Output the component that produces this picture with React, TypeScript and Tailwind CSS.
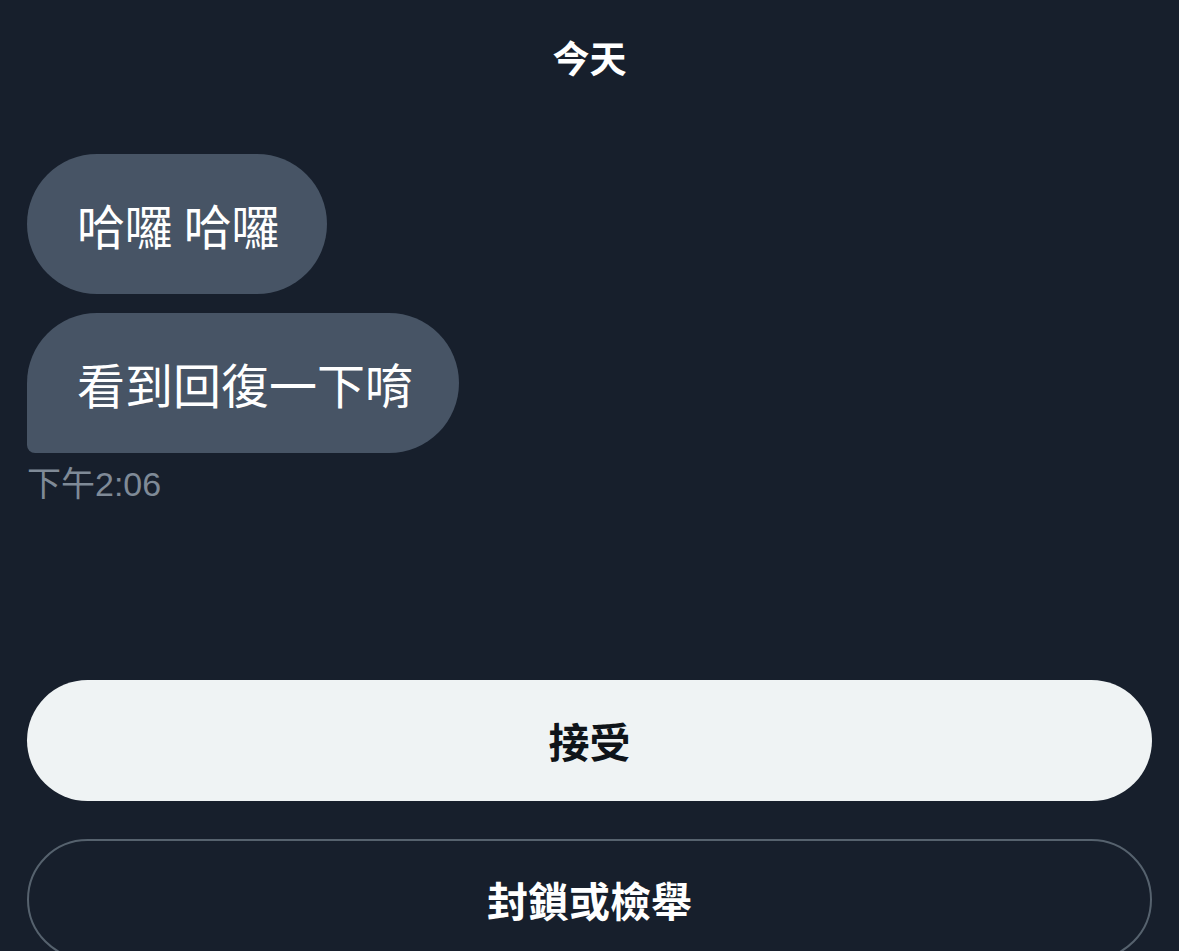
export default function App() {
  return (
    <div
      className="h-[951px] w-full overflow-hidden bg-[#171f2c] px-[27px]"
      style={{ fontFamily: '"Noto Sans CJK TC", "Noto Sans", sans-serif' }}
    >
      {/* Date divider */}
      <div className="pt-[34px] text-center text-[37px] font-bold leading-[46px] text-white">今天</div>

      {/* Messages */}
      <div className="mt-[74px] flex flex-col items-start gap-[19px]">
        <div className="flex h-[140px] items-center rounded-[70px] bg-[#475465] pl-[50px] pr-[47px] text-[48px] leading-none text-white">
          哈囉 哈囉
        </div>
        <div className="flex h-[140px] items-center rounded-[70px] rounded-bl-[8px] bg-[#475465] pl-[50px] pr-[46px] text-[48px] leading-none text-white">
          看到回復一下唷
        </div>
      </div>
      <div
        className="mt-[9px] text-[34px] leading-[44px] text-[#7f8a97]"
        style={{ fontFamily: '"Liberation Sans", "Noto Sans CJK TC", sans-serif' }}
      >
        下午2:06
      </div>

      {/* Actions */}
      <div className="mt-[174px] flex flex-col gap-[38px]">
        <button className="flex h-[121px] w-full items-center justify-center rounded-full bg-[#eff3f4] text-[41px] font-bold text-[#0f1419]">
          接受
        </button>
        <button className="flex h-[121px] w-full items-center justify-center rounded-full border-2 border-[#56626e] text-[41px] font-bold text-white">
          封鎖或檢舉
        </button>
      </div>
    </div>
  )
}
